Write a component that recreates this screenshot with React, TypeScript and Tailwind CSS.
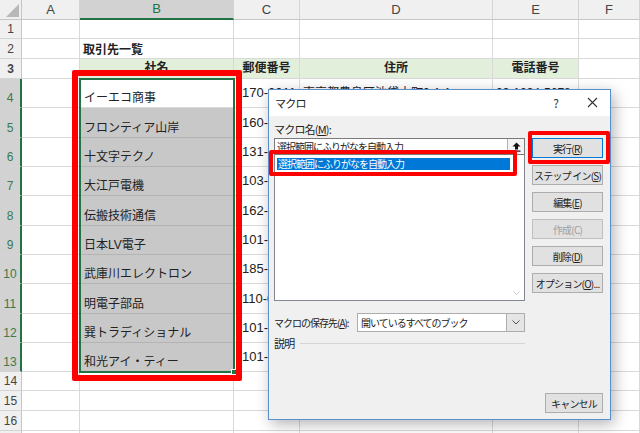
import React from "react";

const cols = [
  { key: "A", w: "w-[58px]" },
  { key: "B", w: "w-[154px]" },
  { key: "C", w: "w-[66px]" },
  { key: "D", w: "w-[193px]" },
  { key: "E", w: "w-[86px]" },
  { key: "F", w: "flex-1" },
];

const companies = [
  ["イーエコ商事", "170-0011"],
  ["フロンティア山岸", "160-0023"],
  ["十文字テクノ", "131-0045"],
  ["大江戸電機", "103-0027"],
  ["伝搬技術通信", "162-0814"],
  ["日本LV電子", "101-0047"],
  ["武庫川エレクトロン", "185-0012"],
  ["明電子部品", "110-0005"],
  ["巽トラディショナル", "101-0061"],
  ["和光アイ・ティー", "101-0065"],
];

const bodyHeights = ["h-[29px]", "h-[30px]", "h-[29px]", "h-[29px]", "h-[30px]", "h-[29px]", "h-[29px]", "h-[30px]", "h-[29px]", "h-[29px]"];

function RowHead({ n, sel, h }: { n?: number; sel?: boolean; h: string }) {
  return (
    <div
      className={`w-[22px] ${h} shrink-0 flex items-end justify-center pb-[1px] text-[12px] leading-[16px] border-b border-[#d4d4d4] ${
        sel ? "bg-[#d2d2d2] text-[#3a7a4c] border-r-2 border-r-[#217346]" : "bg-[#f0f0f0] text-[#444] border-r border-r-[#c6c6c6]"
      }`}
    >
      {n}
    </div>
  );
}

function Cell({ w, children, className = "" }: { w: string; children?: React.ReactNode; className?: string }) {
  return (
    <div className={`${w} shrink-0 border-r border-b border-[#d9d9d9] flex px-[3px] whitespace-nowrap overflow-visible ${className}`}>
      {children}
    </div>
  );
}

function Btn({ children, disabled, focus }: { children: React.ReactNode; disabled?: boolean; focus?: boolean }) {
  return (
    <div
      className={`h-[20px] w-[71px] flex items-center justify-center border ${
        focus ? "border-[#0078d7] bg-[#e1e1e1]" : "border-[#adadad] bg-[#e1e1e1]"
      } ${disabled ? "text-[#a0a0a0] bg-[#cccccc] border-[#bfbfbf]" : "text-[#222]"}`}
    >
      <span className="whitespace-nowrap text-[10px] tracking-[-0.8px]">{children}</span>
    </div>
  );
}

export default function App() {
  return (
    <div className="relative w-[640px] h-[433px] overflow-hidden bg-white font-['Liberation_Sans','Noto_Sans_CJK_JP',sans-serif] text-[#222]">
      {/* column headers */}
      <div className="flex h-[20px]">
        <div className="w-[22px] shrink-0 bg-[#f0f0f0] border-r border-b border-[#c6c6c6] relative">
          <div className="absolute right-[2px] bottom-[2px] w-0 h-0 border-l-[13px] border-l-transparent border-b-[13px] border-b-[#b8b8b8]" />
        </div>
        {cols.map((c) => (
          <div
            key={c.key}
            className={`${c.w} shrink-0 flex items-center justify-center text-[13px] border-r border-[#d4d4d4] ${
              c.key === "B" ? "bg-[#d2d2d2] text-[#217346] border-b-2 border-b-[#217346]" : "bg-[#f0f0f0] text-[#444] border-b border-b-[#c6c6c6]"
            }`}
          >
            {c.key}
          </div>
        ))}
      </div>

      {/* rows 1-3 */}
      <div className="flex h-[19px]">
        <RowHead n={1} h="h-[19px]" />
        {cols.map((c) => (
          <Cell key={c.key} w={c.w} />
        ))}
      </div>
      <div className="flex h-[20px]">
        <RowHead n={2} h="h-[20px]" />
        <Cell w="w-[58px]" />
        <Cell w="w-[154px]" className="items-end pb-[2px] leading-[15px] font-bold text-[12px] font-['Noto_Sans_CJK_JP',sans-serif]">
          取引先一覧
        </Cell>
        <Cell w="w-[66px]" />
        <Cell w="w-[193px]" />
        <Cell w="w-[86px]" />
        <Cell w="flex-1" />
      </div>
      <div className="flex h-[20px] font-bold text-[12px] leading-[15px]">
        <RowHead n={3} h="h-[20px]" />
        <Cell w="w-[58px]" />
        <Cell w="w-[154px]" className="bg-[#e2efda] justify-center items-end pb-[2px]">社名</Cell>
        <Cell w="w-[66px]" className="bg-[#e2efda] justify-center items-end pb-[2px]">郵便番号</Cell>
        <Cell w="w-[193px]" className="bg-[#e2efda] justify-center items-end pb-[2px]">住所</Cell>
        <Cell w="w-[86px]" className="bg-[#e2efda] justify-center items-end pb-[2px]">電話番号</Cell>
        <Cell w="flex-1" />
      </div>

      {/* rows 4-13 */}
      {companies.map(([name, zip], i) => (
        <div key={i} className={`flex ${bodyHeights[i]}`}>
          <RowHead n={i + 4} sel h={bodyHeights[i]} />
          <Cell w="w-[58px]" />
          <Cell
            w="w-[154px]"
            className={`items-end pb-[2px] leading-[14px] text-[12px] pl-[4px] ${i === 0 ? "bg-white" : "bg-[#c8c8c8] border-b-[#b4b4b4]"}`}
          >
            {name}
          </Cell>
          <Cell w="w-[66px]" className="items-center text-[13px] pl-[8px]">{zip}</Cell>
          <Cell w="w-[193px]" className="items-center text-[12px]">{i === 0 ? "東京都豊島区池袋本町0-1-1" : ""}</Cell>
          <Cell w="w-[86px]" className="items-center text-[12px]">{i === 0 ? "03-1234-5678" : ""}</Cell>
          <Cell w="flex-1" />
        </div>
      ))}

      {/* rows 14-17 */}
      {[14, 15, 16, 17].map((n, i) => {
        const h = i === 0 ? "h-[19px]" : "h-[20px]";
        return (
          <div key={n} className={`flex ${h}`}>
            <RowHead n={n < 17 ? n : undefined} h={h} />
            {cols.map((c) => (
              <Cell key={c.key} w={c.w} />
            ))}
          </div>
        );
      })}

      {/* selection border */}
      <div className="absolute left-[79px] top-[78px] w-[156px] h-[295px] border-2 border-[#217346] pointer-events-none">
        <div className="absolute -right-[4px] -bottom-[4px] w-[6px] h-[6px] bg-[#217346] border border-white" />
      </div>

      {/* red highlight around names */}
      <div className="absolute left-[72px] top-[70px] w-[170px] h-[311px] border-[6px] border-[#ff0000] rounded-[2px]" />

      {/* macro dialog */}
      <div className="absolute left-[268px] top-[89px] w-[343px] h-[331px] border border-[#5b8fcb] bg-[#f0f0f0] shadow-[3px_4px_14px_rgba(0,0,0,0.3)] flex flex-col font-['Noto_Sans_CJK_JP',sans-serif]">
        <div className="h-[26px] bg-white flex items-center pl-[6px] pr-[12px] text-[11px] text-[#222]">
          <span className="tracking-[-0.8px]">マクロ</span>
          <span className="ml-auto mr-[28px] text-[12px] text-[#333]">?</span>
          <svg width="11" height="11" viewBox="0 0 11 11" className="mb-[1px]">
            <path d="M1 1 L10 10 M10 1 L1 10" stroke="#333" strokeWidth="1.1" />
          </svg>
        </div>
        <div className="flex-1 flex pl-[5px] pr-[7px]">
          <div className="w-[252px] flex flex-col">
            <div className="mt-[5px] h-[16px] leading-[16px] text-[11px] tracking-[-0.8px] mb-[1px] whitespace-nowrap">
              マクロ名(<span className="underline">M</span>):
            </div>
            <div className="h-[17px] bg-white border border-[#7a7a7a] flex items-center">
              <span className="pl-[2px] text-[10px] tracking-[-1px] flex-1 whitespace-nowrap">選択範囲にふりがなを自動入力</span>
              <div className="w-[17px] h-full border-l border-[#b0b0b0] bg-[#f4f4f4] flex items-center justify-center">
                <svg width="9" height="10" viewBox="0 0 9 10">
                  <path d="M4.5 0.5 L8.5 4.5 L6 4.5 L6 7.5 L3 7.5 L3 4.5 L0.5 4.5 Z" fill="#111" />
                  <rect x="0.5" y="8.5" width="8" height="1.2" fill="#111" />
                </svg>
              </div>
            </div>
            <div className="h-[146px] bg-white border border-t-0 border-[#828790] relative pt-[3px] pl-[2px] pr-[14px]">
              <div className="h-[12px] bg-[#0078d7] text-white text-[10px] leading-[12px] tracking-[-1px] pl-[1px] whitespace-nowrap">
                選択範囲にふりがなを自動入力
              </div>
              <svg className="absolute right-[4px] bottom-[4px]" width="7" height="5" viewBox="0 0 7 5">
                <path d="M0.5 0.5 L3.5 3.5 L6.5 0.5" stroke="#c8c8c8" fill="none" />
              </svg>
            </div>
            <div className="mt-[12px] h-[19px] flex items-center">
              <span className="w-[83px] shrink-0 text-[10px] tracking-[-1px] whitespace-nowrap">
                マクロの保存先(<span className="underline">A</span>):
              </span>
              <div className="flex-1 h-full bg-white border border-[#adadad] flex items-center">
                <span className="pl-[3px] flex-1 text-[10px] tracking-[-1px] whitespace-nowrap">開いているすべてのブック</span>
                <div className="w-[18px] h-full bg-[#e5e5e5] border-l border-[#adadad] flex items-center justify-center">
                  <svg width="8" height="5" viewBox="0 0 8 5">
                    <path d="M0.5 0.5 L4 4 L7.5 0.5" stroke="#555" fill="none" />
                  </svg>
                </div>
              </div>
            </div>
            <div className="mt-[3px] flex items-center gap-[6px]">
              <span className="text-[11px] tracking-[-0.8px]">説明</span>
              <div className="flex-1 h-px bg-[#d5d5d5]" />
            </div>
          </div>
          <div className="ml-[7px] flex flex-col pt-[22px] pb-[6px]">
            <div className="flex flex-col gap-[7px]">
              <Btn focus>
                実行(<span className="underline">R</span>)
              </Btn>
              <Btn>
                ステップ イン(<span className="underline">S</span>)
              </Btn>
              <Btn>
                編集(<span className="underline">E</span>)
              </Btn>
              <Btn disabled>作成(C)</Btn>
              <Btn>
                削除(<span className="underline">D</span>)
              </Btn>
              <Btn>
                オプション(<span className="underline">O</span>)...
              </Btn>
            </div>
            <div className="mt-auto ml-[13px]">
              <div className="h-[20px] w-[58px] flex items-center justify-center border border-[#adadad] bg-[#e1e1e1]">
                <span className="whitespace-nowrap text-[10px] tracking-[-0.8px]">キャンセル</span>
              </div>
            </div>
          </div>
        </div>
      </div>

      {/* red highlights inside dialog */}
      <div className="absolute left-[269px] top-[150px] w-[248px] h-[26px] border-[4px] border-[#ff0000] rounded-[2px]" />
      <div className="absolute left-[528px] top-[131px] w-[82px] h-[33px] border-[4px] border-[#ff0000] rounded-[2px]" />
    </div>
  );
}
